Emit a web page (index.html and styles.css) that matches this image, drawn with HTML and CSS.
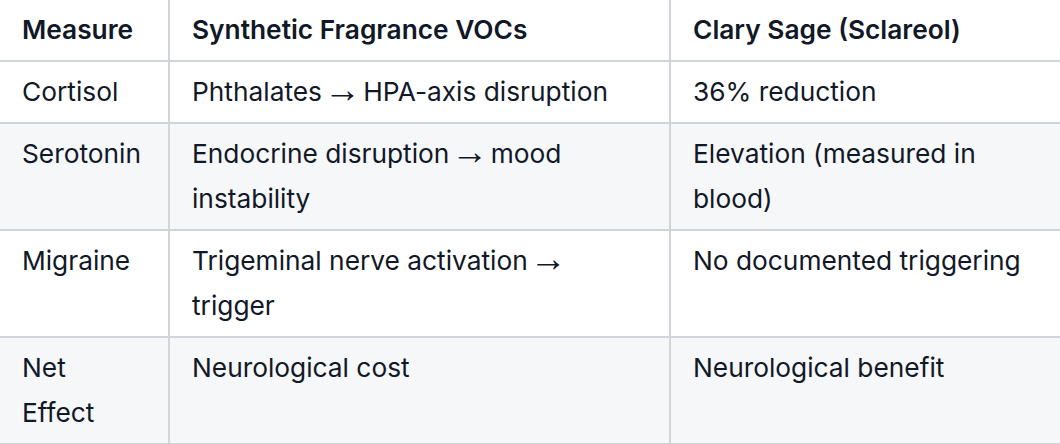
FILE: index.html
```html
<!DOCTYPE html>
<html lang="en">
<head>
<meta charset="utf-8">
<title>Comparison</title>
<link rel="stylesheet" href="styles.css">
</head>
<body>
<table class="cmp">
  <colgroup>
    <col class="c1">
    <col class="c2">
    <col class="c3">
  </colgroup>
  <thead>
    <tr>
      <th>Measure</th>
      <th>Synthetic Fragrance VOCs</th>
      <th>Clary Sage (Sclareol)</th>
    </tr>
  </thead>
  <tbody>
    <tr>
      <td>Cortisol</td>
      <td>Phthalates<span class="arr"> → </span>HPA-axis disruption</td>
      <td>36% reduction</td>
    </tr>
    <tr class="alt">
      <td>Serotonin</td>
      <td>Endocrine disruption<span class="arr"> → </span>mood instability</td>
      <td>Elevation (measured in blood)</td>
    </tr>
    <tr>
      <td>Migraine</td>
      <td>Trigeminal nerve activation<span class="arr"> → </span>trigger</td>
      <td>No documented triggering</td>
    </tr>
    <tr class="alt">
      <td>Net Effect</td>
      <td>Neurological cost</td>
      <td>Neurological benefit</td>
    </tr>
  </tbody>
</table>
</body>
</html>
```
FILE: styles.css
```css
html, body {
  margin: 0;
  padding: 0;
  background: #ffffff;
}
body {
  font-family: Inter, "Noto Sans", "Liberation Sans", sans-serif;
  color: #111827;
  font-size: 26.3px;
  line-height: 45px;
  overflow: hidden;
}
.cmp {
  border-collapse: collapse;
  table-layout: fixed;
  width: 1064px;
}
.c1 { width: 169px; }
.c2 { width: 501px; }
.c3 { width: 394px; }
.cmp th,
.cmp td {
  text-align: left;
  vertical-align: top;
  padding: 7px 26px 8px 22px;
  border: 2px solid #d1d5db;
}
.cmp th {
  font-weight: 600;
  border-top: none;
}
.cmp th:first-child,
.cmp td:first-child {
  border-left: none;
}
.cmp tr.alt td {
  background: #f6f7f9;
}
.arr {
  font-family: "Liberation Sans", sans-serif;
  font-size: 1.4em;
  line-height: 0;
  vertical-align: -0.04em;
  word-spacing: -8px;
}
```
